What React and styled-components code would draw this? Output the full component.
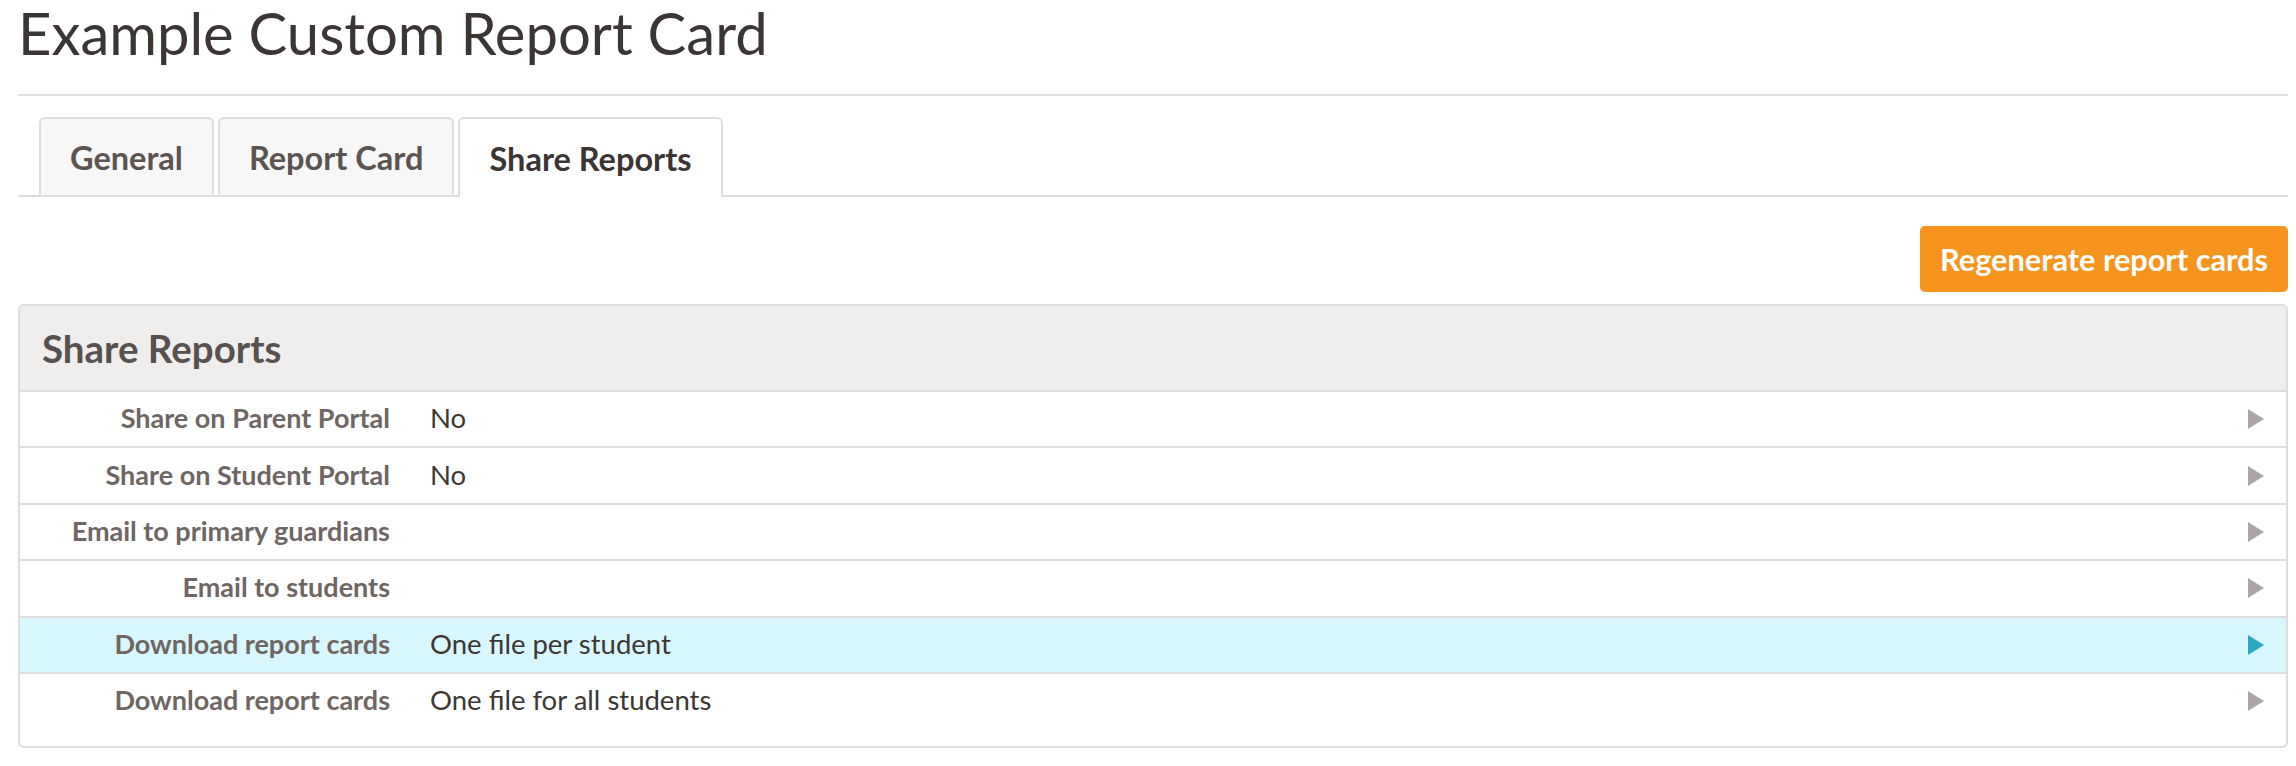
import React from "react";
import styled, { createGlobalStyle } from "styled-components";

const GlobalStyle = createGlobalStyle`
  html, body {
    margin: 0;
    padding: 0;
    background: #ffffff;
  }
  body {
    font-family: Lato, "Open Sans", "Liberation Sans", sans-serif;
    -webkit-font-smoothing: antialiased;
  }
  * { box-sizing: border-box; }
`;

const Page = styled.div`
  padding: 0 8px 0 18px;
`;

const Title = styled.h1`
  margin: 0;
  padding: 4px 0 33px;
  font-size: 58px;
  line-height: 57px;
  font-weight: 400;
  color: #3b3533;
  border-bottom: 2px solid #dfdddb;
`;

const TabBar = styled.div`
  display: flex;
  gap: 4px;
  margin-top: 21px;
  padding-left: 21px;
  border-bottom: 2px solid #dfdddb;
  height: 80px;
  align-items: flex-start;
`;

const Tab = styled.div`
  height: ${(p) => (p.$active ? "80px" : "78px")};
  padding: 0 29px;
  display: flex;
  align-items: center;
  border: 2px solid #dfdddb;
  border-bottom: none;
  border-radius: 6px 6px 0 0;
  background: ${(p) => (p.$active ? "#ffffff" : "#f7f7f7")};
  color: ${(p) => (p.$active ? "#3b3533" : "#5b5451")};
  font-size: 32.5px;
  font-weight: 700;
  margin-bottom: ${(p) => (p.$active ? "-2px" : "0")};
  position: relative;
  z-index: ${(p) => (p.$active ? 1 : 0)};
`;

const Toolbar = styled.div`
  display: flex;
  justify-content: flex-end;
  margin-top: 29px;
  margin-bottom: 12px;
`;

const OrangeButton = styled.button`
  height: 66px;
  padding: 0 20px;
  border: none;
  border-radius: 5px;
  background: #f7941e;
  color: #ffffff;
  font-family: inherit;
  font-size: 30.7px;
  font-weight: 700;
  cursor: pointer;
`;

const Panel = styled.div`
  border: 2px solid #dfdddb;
  border-radius: 6px;
  overflow: hidden;
  padding-bottom: 18px;
`;

const PanelHeader = styled.div`
  height: 86px;
  display: flex;
  align-items: center;
  padding-left: 22px;
  background: #efeeec;
  border-bottom: 2px solid #dfdddb;
  font-size: 38.5px;
  font-weight: 700;
  color: #575150;
`;

const Row = styled.div`
  display: flex;
  align-items: center;
  height: ${(p) => (p.$last ? "54.4px" : "56.4px")};
  padding-bottom: 3px;
  border-bottom: ${(p) => (p.$last ? "none" : "2px solid #dfdddb")};
  background: ${(p) => (p.$active ? "#d8f7fc" : "transparent")};
`;

const Label = styled.div`
  width: 370px;
  flex: none;
  text-align: right;
  font-size: 27px;
  font-weight: 700;
  color: #6e6663;
`;

const Value = styled.div`
  flex: 1;
  margin-left: 40px;
  font-size: 27.5px;
  font-weight: 400;
  color: #3b3735;
`;

const Arrow = styled.svg`
  flex: none;
  width: 16px;
  height: 20px;
  margin-right: 22px;
  margin-top: 3px;
  fill: ${(p) => (p.$active ? "#2ba9c2" : "#aca7a4")};
`;

const rows = [
  { label: "Share on Parent Portal", value: "No" },
  { label: "Share on Student Portal", value: "No" },
  { label: "Email to primary guardians", value: "" },
  { label: "Email to students", value: "" },
  { label: "Download report cards", value: "One file per student", active: true },
  { label: "Download report cards", value: "One file for all students" },
];

export default function App() {
  return (
    <>
      <GlobalStyle />
      <Page>
        <Title>Example Custom Report Card</Title>
        <TabBar>
          <Tab>General</Tab>
          <Tab>Report Card</Tab>
          <Tab $active>Share Reports</Tab>
        </TabBar>
        <Toolbar>
          <OrangeButton>Regenerate report cards</OrangeButton>
        </Toolbar>
        <Panel>
          <PanelHeader>Share Reports</PanelHeader>
          {rows.map((r, i) => (
            <Row key={i} $active={r.active} $last={i === rows.length - 1}>
              <Label>{r.label}</Label>
              <Value>{r.value}</Value>
              <Arrow $active={r.active} viewBox="0 0 16 20">
                <path d="M0 0 L16 10 L0 20 Z" />
              </Arrow>
            </Row>
          ))}
        </Panel>
      </Page>
    </>
  );
}
